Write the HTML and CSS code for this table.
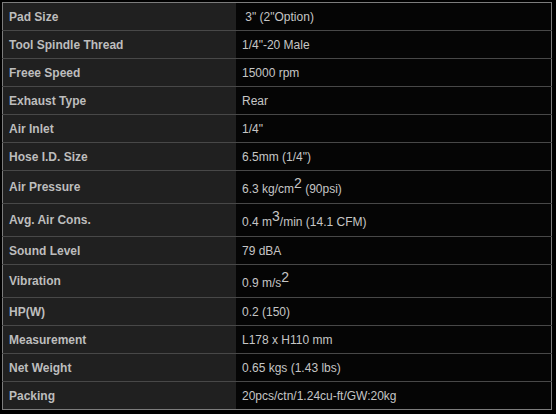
FILE: index.html
```html
<!DOCTYPE html>
<html>
<head>
<meta charset="utf-8">
<link rel="stylesheet" href="styles.css">
</head>
<body>
<table class="spec">
<tr><td class="k">Pad Size</td><td class="v">&nbsp;3" (2"Option)</td></tr>
<tr><td class="k">Tool Spindle Thread</td><td class="v">1/4"-20 Male</td></tr>
<tr><td class="k">Freee Speed</td><td class="v">15000 rpm</td></tr>
<tr><td class="k">Exhaust Type</td><td class="v">Rear</td></tr>
<tr><td class="k">Air Inlet</td><td class="v">1/4"</td></tr>
<tr><td class="k">Hose I.D. Size</td><td class="v">6.5mm (1/4")</td></tr>
<tr class="tall"><td class="k">Air Pressure</td><td class="v low">6.3 kg/cm<sup>2</sup> (90psi)</td></tr>
<tr class="tall"><td class="k">Avg. Air Cons.</td><td class="v low">0.4 m<sup>3</sup>/min (14.1 CFM)</td></tr>
<tr><td class="k">Sound Level</td><td class="v">79 dBA</td></tr>
<tr class="mid"><td class="k">Vibration</td><td class="v low">0.9 m/s<sup>2</sup></td></tr>
<tr><td class="k">HP(W)</td><td class="v">0.2 (150)</td></tr>
<tr><td class="k">Measurement</td><td class="v">L178 x H110 mm</td></tr>
<tr><td class="k">Net Weight</td><td class="v">0.65 kgs (1.43 lbs)</td></tr>
<tr><td class="k">Packing</td><td class="v">20pcs/ctn/1.24cu-ft/GW:20kg</td></tr>
</table>
</body>
</html>
```
FILE: styles.css
```css
html, body {
  margin: 0;
  background: #000;
}
body {
  padding: 2px;
  font-family: "Liberation Sans", Arial, sans-serif;
  font-size: 12px;
}
.spec {
  border-collapse: collapse;
  width: 550px;
  border: 1px solid #7c7c7c;
}
.spec td {
  height: 27px;
  padding: 0 0 0 6px;
  border-bottom: 1px solid #484848;
  vertical-align: middle;
  line-height: 14px;
}
.spec tr:last-child td {
  border-bottom: 1px solid #7c7c7c;
}
.k {
  width: 227px;
  background: #202020;
  color: #bdbdbd;
  font-weight: bold;
}
.v {
  background: #050505;
  color: #c6c6c6;
}
.spec .tall td {
  height: 28px;
}
.spec .mid td {
  height: 28px;
}
.spec td.low {
  padding-top: 4px;
}
sup {
  font-size: 14px;
  line-height: 0;
  vertical-align: 5px;
}
```
